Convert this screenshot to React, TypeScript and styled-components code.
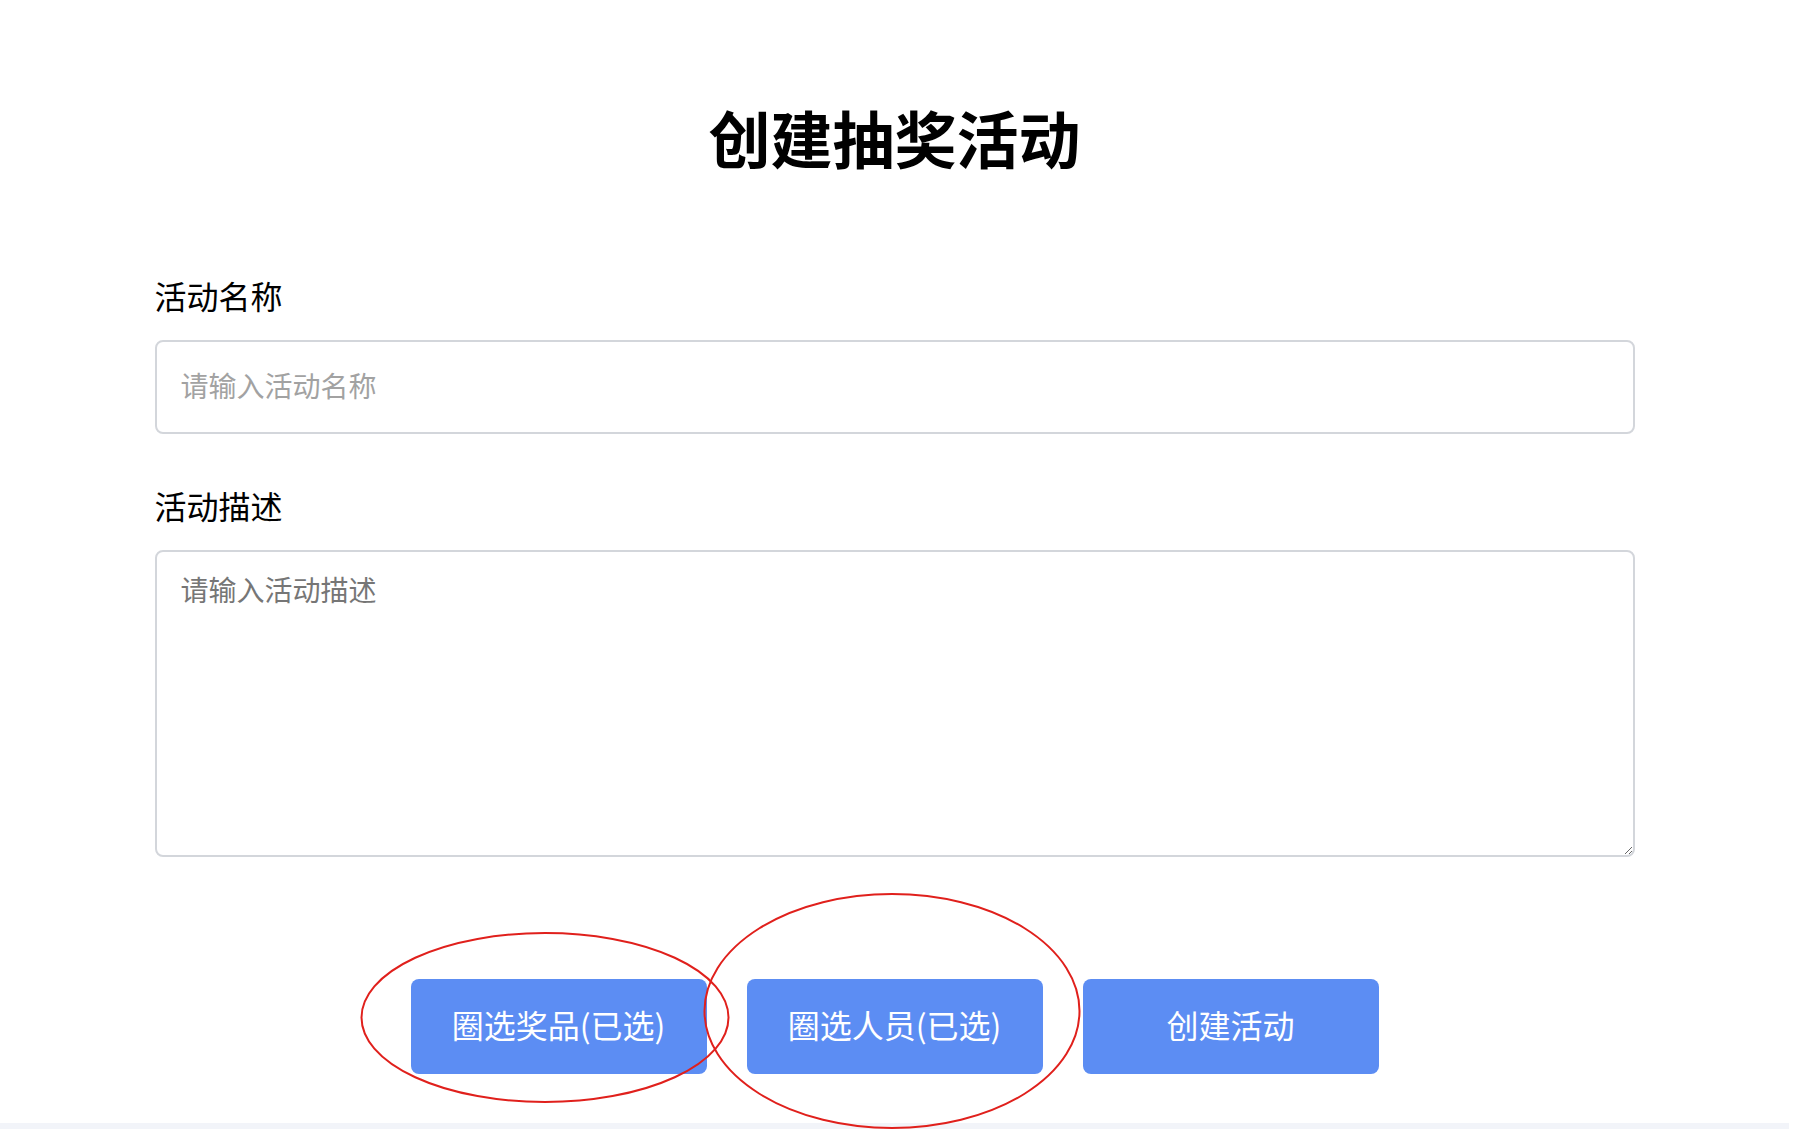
import styled, { createGlobalStyle } from "styled-components";

const GlobalStyle = createGlobalStyle`
  html, body {
    margin: 0;
    padding: 0;
    background: #ffffff;
    overflow: hidden;
  }
  body {
    font-family: "Noto Sans CJK SC", "Noto Sans", sans-serif;
    color: #000000;
  }
  * {
    box-sizing: border-box;
  }
`;

function CreateLottery() {
  return (
    <Page>
      <GlobalStyle />
      <Container>
        <Title>创建抽奖活动</Title>

        <Field>
          <Label>活动名称</Label>
          <Input placeholder="请输入活动名称" />
        </Field>

        <Field>
          <Label>活动描述</Label>
          <TextArea placeholder="请输入活动描述" />
        </Field>

        <ButtonRow>
          <ActionButton>圈选奖品(已选)</ActionButton>
          <ActionButton>圈选人员(已选)</ActionButton>
          <ActionButton>创建活动</ActionButton>

          {/* 截图上的红圈标注 */}
          <Marks viewBox="0 0 968 95" width="968" height="95">
            <ellipse cx="134" cy="38.5" rx="183.5" ry="84.5" />
            <ellipse cx="481" cy="32" rx="187.5" ry="117" />
          </Marks>
        </ButtonRow>
      </Container>
      <BottomStrip />
    </Page>
  );
}

export default function App() {
  return <CreateLottery />;
}

const Page = styled.div`
  min-height: 1129px;
  padding: 106px 17px 0 0;
  display: flex;
  flex-direction: column;
`;

const Container = styled.main`
  width: 1480px;
  margin: 0 auto;
  display: flex;
  flex-direction: column;
`;

const Title = styled.h1`
  margin: 0 0 111px;
  font-size: 62px;
  line-height: 62px;
  font-weight: 700;
  text-align: center;
  color: #000;
`;

const Field = styled.div`
  display: flex;
  flex-direction: column;
  margin-bottom: 55px;
`;

const Label = styled.label`
  font-size: 32px;
  line-height: 32px;
  color: #000;
  margin-bottom: 29px;
`;

const Input = styled.input`
  width: 100%;
  height: 94px;
  padding: 0 24px 4px;
  border: 2px solid #d3d6db;
  border-radius: 8px;
  font-family: "Noto Sans CJK SC", "Noto Sans", sans-serif;
  font-size: 28px;
  color: #333;
  outline: none;

  &::placeholder {
    color: #a2a2a2;
  }
`;

const TextArea = styled.textarea`
  width: 100%;
  height: 307px;
  padding: 16px 24px;
  border: 2px solid #d3d6db;
  border-radius: 8px;
  font-family: "Noto Sans CJK SC", "Noto Sans", sans-serif;
  font-size: 28px;
  line-height: 1.5;
  color: #333;
  outline: none;
  resize: vertical;

  &::placeholder {
    color: #767676;
  }
`;

const ButtonRow = styled.div`
  position: relative;
  align-self: center;
  display: flex;
  gap: 40px;
  margin-top: 67px;
`;

const ActionButton = styled.button`
  width: 296px;
  height: 95px;
  padding: 0 0 6px;
  border: none;
  border-radius: 8px;
  background: #5c8df3;
  color: #ffffff;
  font-family: "Noto Sans CJK SC", "Noto Sans", sans-serif;
  font-size: 32px;
  cursor: pointer;
`;

const Marks = styled.svg`
  position: absolute;
  left: 0;
  top: 0;
  overflow: visible;
  pointer-events: none;

  ellipse {
    fill: none;
    stroke: #e0201c;
    stroke-width: 2;
  }
`;

const BottomStrip = styled.div`
  margin-top: 49px;
  height: 40px;
  background: #f2f4f9;
`;
